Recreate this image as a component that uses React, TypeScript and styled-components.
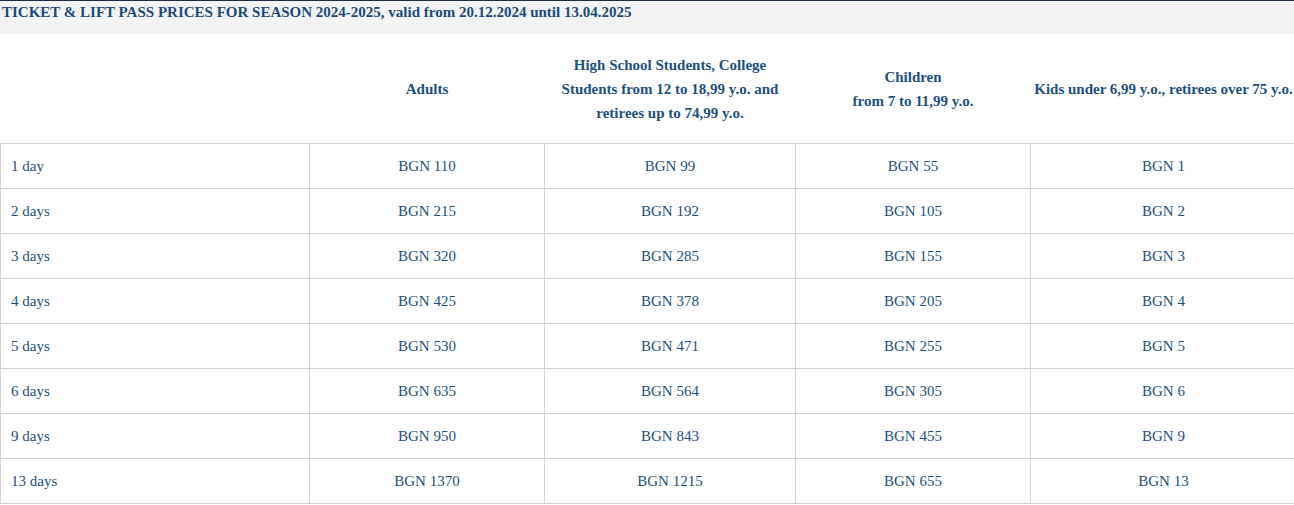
import styled, { createGlobalStyle } from "styled-components";

const serif = `"Liberation Serif", "Times New Roman", Tinos, Times, serif`

const GlobalStyle = createGlobalStyle`
    html, body {
        margin: 0;
        padding: 0;
        overflow: hidden;
        background: #ffffff;
        font-family: ${serif};
    }
`

const Page = styled.div`
    width: 1296px;
    border-top: 1px solid #1c2d44;
    font-family: ${serif};
`

const TitleBar = styled.div`
    background: #f3f3f3;
    height: 33px;
    padding: 0 2px;
    font-family: ${serif};
    font-size: 15px;
    font-weight: bold;
    line-height: 22px;
    color: #1b4b7a;
`

const PriceTable = styled.table`
    border-collapse: collapse;
    table-layout: fixed;
    width: 1296px;
    color: #1e4f7e;
    font-family: ${serif};
    font-size: 15px;
`

const HeadCell = styled.th`
    height: 109px;
    padding: 0 2px;
    font-family: ${serif};
    font-weight: bold;
    line-height: 24px;
    text-align: center;
    vertical-align: middle;
    white-space: nowrap;
    border: none;
`

const Row = styled.tr`
    height: 45px;
`

const Cell = styled.td<{ $label?: boolean }>`
    border: 1px solid #d3d3d3;
    padding: 0 ${p => (p.$label ? "10px" : "4px")};
    font-family: ${serif};
    text-align: ${p => (p.$label ? "left" : "center")};
    vertical-align: middle;
    line-height: 20px;
`

const widths = [309, 235, 251, 235, 266]

const prices: [string, number, number, number, number][] = [
    ["1 day", 110, 99, 55, 1],
    ["2 days", 215, 192, 105, 2],
    ["3 days", 320, 285, 155, 3],
    ["4 days", 425, 378, 205, 4],
    ["5 days", 530, 471, 255, 5],
    ["6 days", 635, 564, 305, 6],
    ["9 days", 950, 843, 455, 9],
    ["13 days", 1370, 1215, 655, 13],
]

const App = () => {
    return (
        <Page>
            <GlobalStyle />
            <TitleBar>
                TICKET &amp; LIFT PASS PRICES FOR SEASON 2024-2025, valid from 20.12.2024 until 13.04.2025
            </TitleBar>
            <PriceTable>
                <colgroup>
                    {widths.map((w, i) => (
                        <col key={i} style={{ width: w }} />
                    ))}
                </colgroup>
                <thead>
                    <tr>
                        <HeadCell></HeadCell>
                        <HeadCell>Adults</HeadCell>
                        <HeadCell>
                            High School Students, College
                            <br />
                            Students from 12 to 18,99 y.o. and
                            <br />
                            retirees up to 74,99 y.o.
                        </HeadCell>
                        <HeadCell>
                            Children
                            <br />
                            from 7 to 11,99 y.o.
                        </HeadCell>
                        <HeadCell>Kids under 6,99 y.o., retirees over 75 y.o.</HeadCell>
                    </tr>
                </thead>
                <tbody>
                    {prices.map(([label, a, b, c, d]) => (
                        <Row key={label}>
                            <Cell $label>{label}</Cell>
                            <Cell>BGN {a}</Cell>
                            <Cell>BGN {b}</Cell>
                            <Cell>BGN {c}</Cell>
                            <Cell>BGN {d}</Cell>
                        </Row>
                    ))}
                </tbody>
            </PriceTable>
        </Page>
    );
}

export default App;
